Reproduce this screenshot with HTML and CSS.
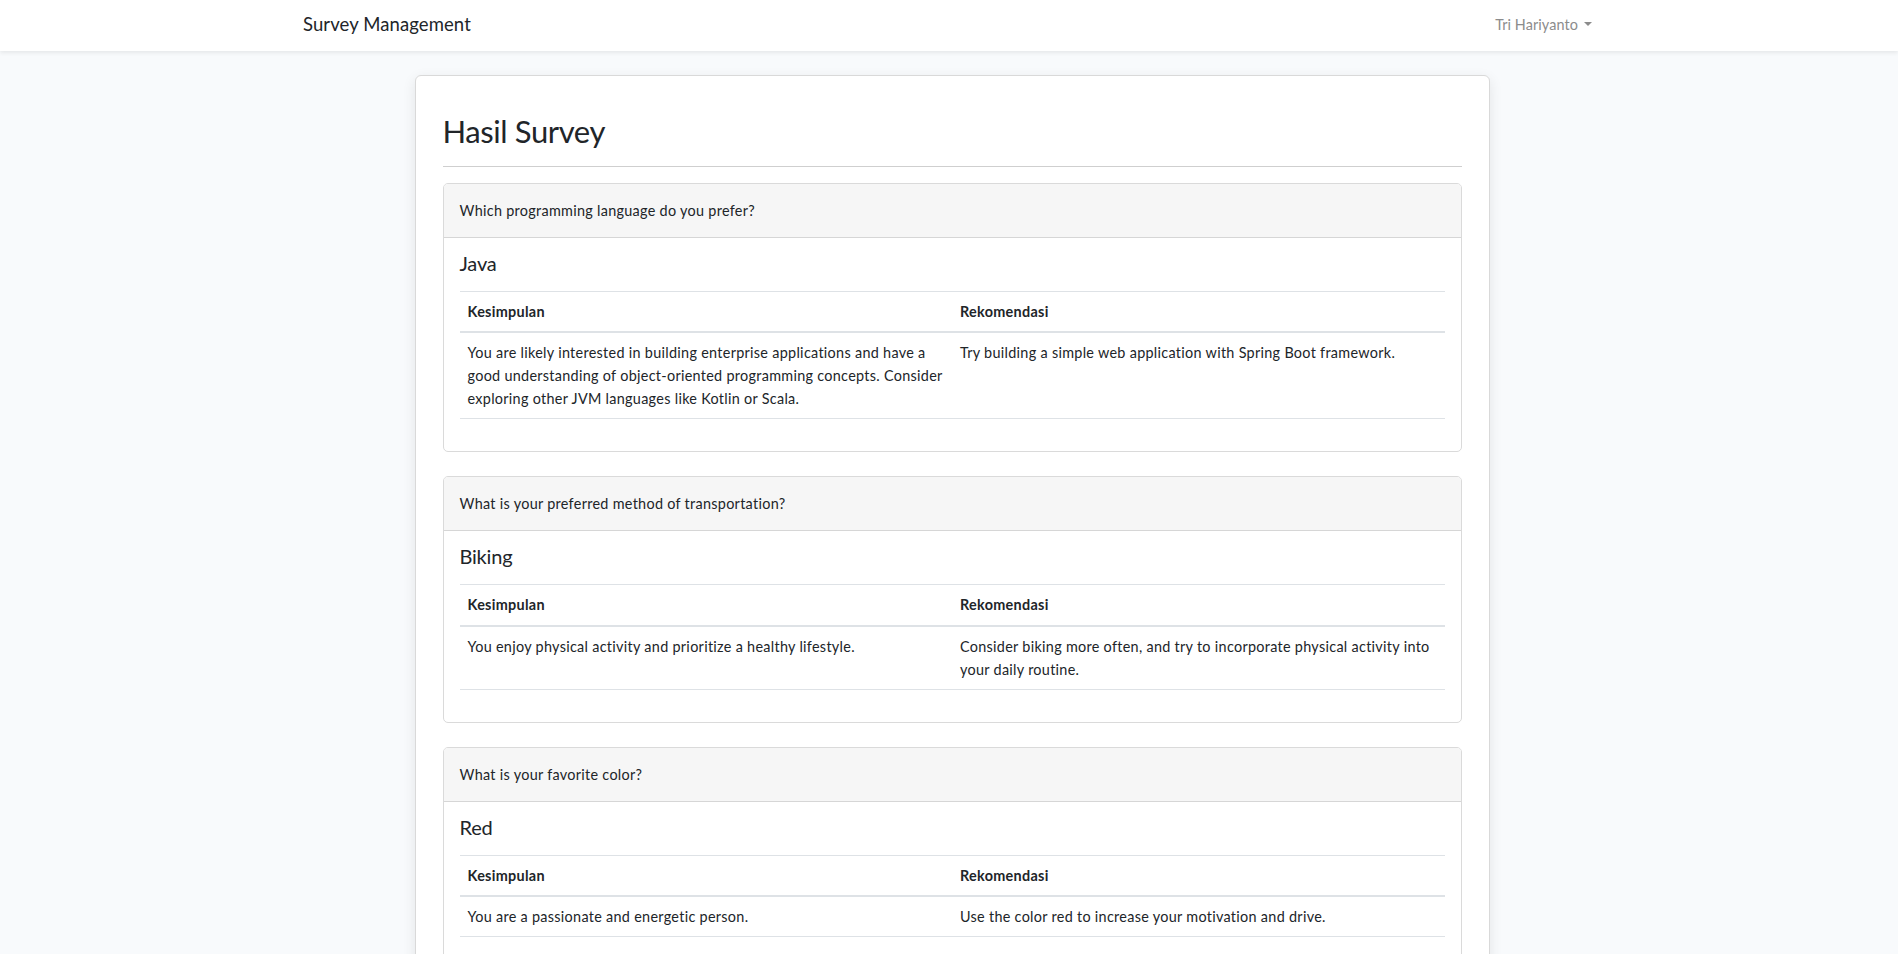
FILE: index.html
```html
<!DOCTYPE html>
<html lang="id">
<head>
<meta charset="utf-8">
<title>Hasil Survey</title>
<link rel="stylesheet" href="styles.css">
</head>
<body>
<nav class="navbar">
  <div class="container nav-inner">
    <a class="brand" href="#">Survey Management</a>
    <a class="user" href="#">Tri Hariyanto <span class="caret"></span></a>
  </div>
</nav>
<main class="main">
  <div class="panel">
    <h2 class="title">Hasil Survey</h2>
    <hr class="divider">

    <div class="qcard">
      <div class="qcard-header">Which programming language do you prefer?</div>
      <div class="qcard-body">
        <h5 class="answer">Java</h5>
        <table class="result">
          <thead><tr><th>Kesimpulan</th><th>Rekomendasi</th></tr></thead>
          <tbody><tr>
            <td>You are likely interested in building enterprise applications and have a good understanding of object-oriented programming concepts. Consider exploring other JVM languages like Kotlin or Scala.</td>
            <td>Try building a simple web application with Spring Boot framework.</td>
          </tr></tbody>
        </table>
      </div>
    </div>

    <div class="qcard">
      <div class="qcard-header">What is your preferred method of transportation?</div>
      <div class="qcard-body">
        <h5 class="answer">Biking</h5>
        <table class="result">
          <thead><tr><th>Kesimpulan</th><th>Rekomendasi</th></tr></thead>
          <tbody><tr>
            <td>You enjoy physical activity and prioritize a healthy lifestyle.</td>
            <td>Consider biking more often, and try to incorporate physical activity into your daily routine.</td>
          </tr></tbody>
        </table>
      </div>
    </div>

    <div class="qcard">
      <div class="qcard-header">What is your favorite color?</div>
      <div class="qcard-body">
        <h5 class="answer">Red</h5>
        <table class="result">
          <thead><tr><th>Kesimpulan</th><th>Rekomendasi</th></tr></thead>
          <tbody><tr>
            <td>You are a passionate and energetic person.</td>
            <td>Use the color red to increase your motivation and drive.</td>
          </tr></tbody>
        </table>
      </div>
    </div>
  </div>
</main>
</body>
</html>
```

FILE: styles.css
```css
html { scrollbar-width: none; }
::-webkit-scrollbar { width: 0; height: 0; }
* { box-sizing: border-box; }
body {
  margin: 0;
  background: #f8fafc;
  color: #212529;
  font-family: "Lato", "Noto Sans", sans-serif;
  font-size: 14.4px;
  line-height: 1.6;
  letter-spacing: 0.3px;
}
a { text-decoration: none; }

.navbar {
  background: #fff;
  height: 51px;
  box-shadow: 0 2px 4px rgba(0,0,0,0.075);
  position: relative;
  z-index: 2;
}
.container {
  max-width: 1320px;
  margin: 0 auto;
  padding: 0 12px;
}
.nav-inner {
  height: 100%;
  display: flex;
  align-items: center;
  justify-content: space-between;
}
.brand {
  color: #212529;
  font-size: 18.5px;
  letter-spacing: 0.1px;
  padding-left: 2px;
  margin-top: -2px;
}
.user {
  color: #8c8c8c;
  font-size: 14.4px;
  letter-spacing: 0.1px;
  padding-right: 5px;
  display: flex;
  align-items: center;
  gap: 6px;
  margin-top: -2px;
}
.caret {
  display: inline-block;
  width: 0;
  height: 0;
  border-left: 4px solid transparent;
  border-right: 4px solid transparent;
  border-top: 4.5px solid #8c8c8c;
  margin-top: -1px;
}

.main {
  display: flex;
  justify-content: center;
  padding: 24px 0 0 6px;
}
.panel {
  width: 1075px;
  background: #fff;
  border: 1px solid #d9d9d9;
  border-radius: 6px;
  box-shadow: 0 4px 14px rgba(0,0,0,0.09);
  padding: 37px 27px 20px;
}
.title {
  margin: 0 0 16px;
  font-size: 31px;
  letter-spacing: -0.4px;
  font-weight: 400;
  line-height: 1.2;
}
.divider {
  border: 0;
  border-top: 1px solid #cfcfcf;
  margin: 0 0 16px;
}
.qcard {
  border: 1px solid #dadada;
  border-radius: 5px;
  margin-bottom: 24px;
  overflow: hidden;
}
.qcard-header {
  background: #f6f6f6;
  border-bottom: 1px solid #d6d6d6;
  padding: 15px 16px;
  font-size: 14.4px;
}
.qcard-body {
  padding: 13px 16px 16px;
}
.answer {
  margin: 0 0 16px;
  font-size: 20px;
  letter-spacing: -0.2px;
  font-weight: 400;
  line-height: 1.2;
}
.result {
  width: 100%;
  border-collapse: collapse;
  margin-bottom: 16px;
}
.result th, .result td {
  width: 50%;
  text-align: left;
  vertical-align: top;
  padding: 8px;
  border-top: 1px solid #dee2e6;
}
.result th {
  font-weight: 700;
  border-bottom: 2px solid #dee2e6;
}
.result td {
  border-bottom: 1px solid #dee2e6;
}
```
